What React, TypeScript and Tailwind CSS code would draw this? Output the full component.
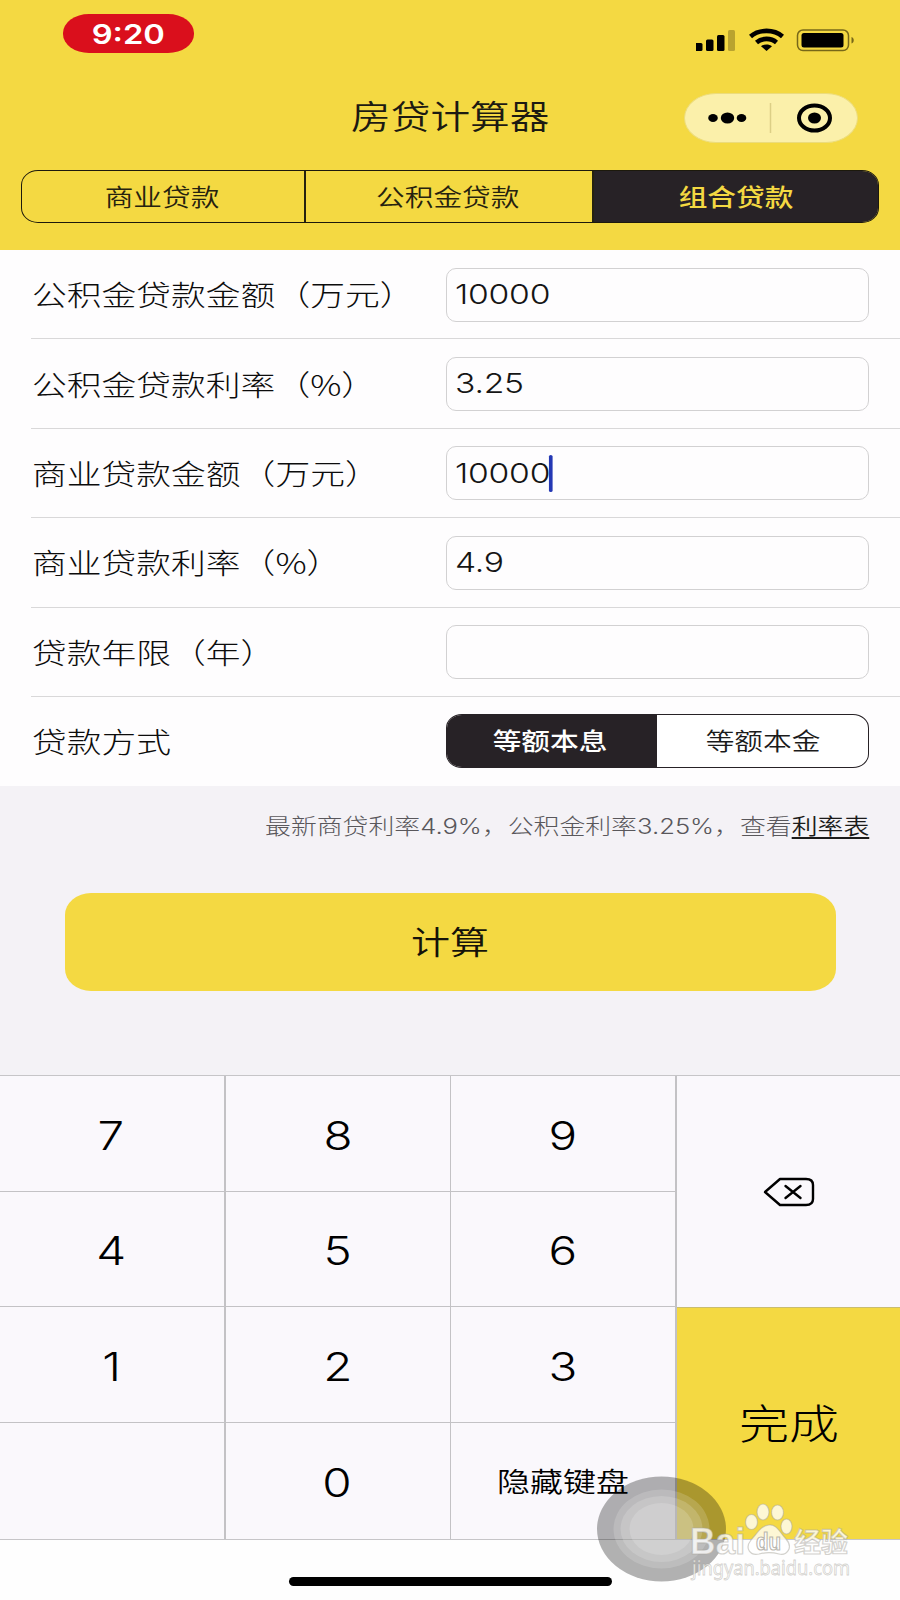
import clsx from "clsx";

const loanTabs = ["商业贷款", "公积金贷款", "组合贷款"];

const fields = [
  { label: "公积金贷款金额（万元）", value: "10000" },
  { label: "公积金贷款利率（%）", value: "3.25" },
  { label: "商业贷款金额（万元）", value: "10000", focused: true },
  { label: "商业贷款利率（%）", value: "4.9" },
  { label: "贷款年限（年）", value: "" },
];

const keys = ["7", "8", "9", "4", "5", "6", "1", "2", "3", "", "0", "隐藏键盘"];

function StatusBar() {
  return (
    <div className="flex justify-between pl-[63px] pr-[45px] pt-[14px]">
      <div className="flex h-[39px] w-[131px] items-center justify-center rounded-[26px/19px] bg-[#da0f1c]">
        <span className="mt-px inline-block scale-x-[1.21] font-[Inter] text-[27px] font-semibold leading-none text-white">
          9:20
        </span>
      </div>
      <div className="flex items-start pt-[14px]">
        <svg width="42" height="24" viewBox="0 0 42 24" className="mr-[11px]">
          <rect x="-1" y="15" width="7.5" height="8" rx="1.5" />
          <rect x="10" y="11.5" width="7.5" height="11.5" rx="1.5" />
          <rect x="21" y="7" width="7.5" height="16" rx="1.5" />
          <rect x="32" y="2" width="7" height="21" rx="1.5" fill="#b9a32f" />
        </svg>
        <svg width="36" height="24" viewBox="0 0 36 24" className="mr-[10px]">
          <g fill="none" stroke="#000" strokeWidth="4.6">
            <path d="M1.500 8.500C10 1 25 1 33.500 8.500" />
            <path d="M7.500 14.500C13 9.700 22 9.700 27.500 14.500" />
          </g>
          <path d="M12 18.200C15 15.800 20 15.800 23 18.200L17.500 23Z" />
        </svg>
        <svg width="60" height="24" viewBox="0 0 60 24">
          <rect x="2.500" y="2" width="51" height="20.600" rx="5.500" fill="none" stroke="#776818" strokeWidth="1.500" />
          <rect x="6.500" y="5" width="42" height="14.500" rx="2.500" />
          <path d="M56.500 9C59.500 10 59.500 14.500 56.500 15.500Z" fill="#776818" />
        </svg>
      </div>
    </div>
  );
}

function Header() {
  return (
    <header className="h-[250px] bg-[#f4d942]">
      <StatusBar />
      <div className="mt-[40px] grid h-[50px] grid-cols-[1fr_200px_1fr] items-center">
        <h1 className="col-start-2 -mt-[5px] text-center text-[32.500px] leading-none font-[350] whitespace-nowrap text-[#1c1a12]">
          <span className="inline-block scale-x-[1.22]">房贷计算器</span>
        </h1>
        <div className="mr-[42px] flex h-[50px] w-[174px] items-center justify-self-end rounded-[32px/25px] border border-[#ecdc7c] bg-[#fbf0aa]">
          <svg width="172" height="48" viewBox="0 0 172 48">
            <ellipse cx="28" cy="24" rx="4.800" ry="4" />
            <ellipse cx="42.500" cy="24" rx="6.700" ry="5.500" />
            <ellipse cx="56.500" cy="24" rx="4.800" ry="4" />
            <path d="M85.500 9V39" stroke="#dccf86" strokeWidth="1.500" />
            <ellipse cx="129.500" cy="24" rx="15.500" ry="12.600" fill="none" stroke="#000" strokeWidth="4" />
            <ellipse cx="129.500" cy="24" rx="6.500" ry="5.500" />
          </svg>
        </div>
      </div>
      <div className="mx-[21px] mt-[27px] grid h-[53px] grid-cols-[284px_288px_1fr] overflow-hidden rounded-[17px/15px] border border-[#1c190c]">
        {loanTabs.map((tab, i) => (
          <div
            key={tab}
            className={clsx(
              "flex items-center justify-center text-[23.500px]",
              i === 2 ? "bg-[#272226] font-medium text-[#f4d942]" : "border-r-2 border-[#26220f] pr-[2px] font-[350] text-[#26220f]"
            )}
          >
            <span className="inline-block scale-x-[1.22]">{tab}</span>
          </div>
        ))}
      </div>
    </header>
  );
}

function LoanForm() {
  return (
    <section className="bg-[#fefdfe]">
      {fields.map(({ label, value, focused }) => (
        <div key={label} className="ml-[31px] flex h-[89.400px] items-center justify-between border-b border-[#d9d8d9] pr-[31px] pt-px">
          <span className="ml-px inline-block origin-left scale-x-[1.22] text-[28.500px] font-light whitespace-nowrap text-[#0c0c0c]">
            {label}
          </span>
          <div className="flex h-[54px] w-[423px] items-center rounded-[10px] border border-[#d2d1d2] pl-[8px]">
            <span className="relative inline-block origin-left scale-x-[1.22] font-[Inter] text-[27.600px] font-light leading-none tracking-[-0.200px] text-[#151515]">
              {value}
              {focused && <i className="absolute -right-[2px] -top-[5px] h-[37px] w-[3.500px] rounded-sm bg-[#2438b4]" />}
            </span>
          </div>
        </div>
      ))}
      <div className="ml-[31px] flex h-[89px] items-center justify-between pr-[31px]">
        <span className="ml-px inline-block origin-left scale-x-[1.22] text-[28.500px] font-light text-[#0c0c0c]">贷款方式</span>
        <div className="grid h-[54px] w-[423px] grid-cols-[210px_1fr] overflow-hidden rounded-[16px/14px] border border-[#272226] bg-white text-[23.500px]">
          <div className="flex items-center justify-center bg-[#272226] pr-[4px] pb-px font-medium text-white">
            <span className="inline-block scale-x-[1.22]">等额本息</span>
          </div>
          <div className="flex items-center justify-center pb-px font-[350] text-[#1b1b1b]">
            <span className="inline-block scale-x-[1.22]">等额本金</span>
          </div>
        </div>
      </div>
    </section>
  );
}

function Keypad() {
  return (
    <section className="grid h-[465px] grid-cols-[677px_1fr] border-y border-[#c6c5c8] bg-[#faf8fc] text-black">
      <div className="grid grid-cols-3 grid-rows-4">
        {keys.map((key, i) => (
          <div
            key={i}
            className={clsx(
              "flex items-center justify-center border-[#c3c2c5] pr-px",
              i % 3 === 1 ? "border-r" : "border-r-2",
              i < 9 && "border-b"
            )}
          >
            <span
              className={clsx(
                "inline-block whitespace-nowrap",
                key.length > 1 ? "scale-x-[1.22] text-[27px] font-[350]" : "mt-[5px] scale-x-[1.22] font-[Inter] text-[39px] font-light"
              )}
            >
              {key}
            </span>
          </div>
        ))}
      </div>
      <div className="grid grid-rows-2">
        <div className="flex items-center justify-center">
          <svg width="52" height="30" viewBox="0 0 52 30" fill="none" stroke="#000" strokeWidth="2.400" className="ml-px">
            <path d="M2 15L17 2H43Q50 2 50 8V22Q50 28 43 28H17Z" strokeLinejoin="round" />
            <path d="M22.500 9L37.500 21M37.500 9L22.500 21" strokeLinecap="round" />
          </svg>
        </div>
        <div className="flex items-center justify-center border-t border-[#c9bd70] bg-[#f4d942] pb-[4px] text-[41px]">
          <span className="inline-block scale-x-[1.22] font-light">完成</span>
        </div>
      </div>
    </section>
  );
}

function AssistiveTouch() {
  return (
    <svg width="130" height="106" viewBox="0 0 130 106" className="absolute left-[597px] top-[1475.5px]">
      <ellipse cx="64.500" cy="53" rx="64.500" ry="52.500" fill="#000" fillOpacity=".3" />
      <g fill="#fff" fillOpacity=".16">
        <ellipse cx="64.500" cy="53" rx="48" ry="39.500" />
        <ellipse cx="64.500" cy="53" rx="41" ry="33" />
        <ellipse cx="64.500" cy="53" rx="32" ry="26" />
      </g>
    </svg>
  );
}

function Watermark() {
  return (
    <svg
      width="180"
      height="86"
      viewBox="0 0 180 86"
      className="absolute left-[684px] top-[1499px]"
      fill="#fff"
      fillOpacity=".78"
      stroke="#a8a59c"
      strokeOpacity=".5"
      strokeWidth="1.2"
    >
      <text x="6" y="55" fontFamily="Liberation Sans" fontSize="36" fontWeight="700" textLength="55" lengthAdjust="spacingAndGlyphs">Bai</text>
      <ellipse cx="67.500" cy="23" rx="6" ry="7.500" />
      <ellipse cx="79" cy="13" rx="6" ry="8" />
      <ellipse cx="93.500" cy="13.500" rx="6" ry="7.500" />
      <ellipse cx="102.500" cy="27.500" rx="5.500" ry="7.500" />
      <path d="M85 26C93 25 96 34 102 40C110 49 102 57 95 55C88 53 82 53 75 55C67 57 60 50 67 41C73 35 76 27 85 26Z" />
      <text x="72" y="51" fontFamily="Liberation Sans" fontSize="23" fontWeight="700" textLength="25" lengthAdjust="spacingAndGlyphs" strokeOpacity=".8">du</text>
      <text x="110" y="53" fontFamily="Noto Sans CJK SC" fontSize="27" fontWeight="700" textLength="54">经验</text>
      <text x="8" y="76" fontFamily="Noto Sans" fontSize="19" textLength="158" lengthAdjust="spacingAndGlyphs" strokeWidth=".8">jingyan.baidu.com</text>
    </svg>
  );
}

export default function App() {
  return (
    <main className="relative h-[1600px] w-[900px] overflow-hidden bg-[#fefefe] font-['Noto_Sans_CJK_SC',sans-serif]">
      <Header />
      <LoanForm />
      <section className="h-[289px] bg-[#f4f2f6] px-[31px] pt-[23px]">
        <p className="flex h-[34px] items-center justify-end text-[21.200px] font-light whitespace-nowrap text-[#59575b]">
          <span className="inline-block origin-right scale-x-[1.22]">
            最新商贷利率
            <span className="font-[Inter] text-[21px] font-light">4.9%</span>
            ，公积金利率
            <span className="font-[Inter] text-[21px] font-light">3.25%</span>
            ，查看
            <u className="font-[350] text-[#1b1b1b] decoration-[1.500px] underline-offset-[3px]">利率表</u>
          </span>
        </p>
        <div className="mx-[33.500px] mt-[50px] flex h-[98px] items-center justify-center rounded-[26px/22px] bg-[#f4d942] pb-[4px] text-[32px] text-[#151309]">
          <span className="inline-block scale-x-[1.22] font-[350]">计算</span>
        </div>
      </section>
      <Keypad />
      <div className="mx-auto mt-[37px] h-[9px] w-[323px] rounded-full bg-black" />
      <AssistiveTouch />
      <Watermark />
    </main>
  );
}
